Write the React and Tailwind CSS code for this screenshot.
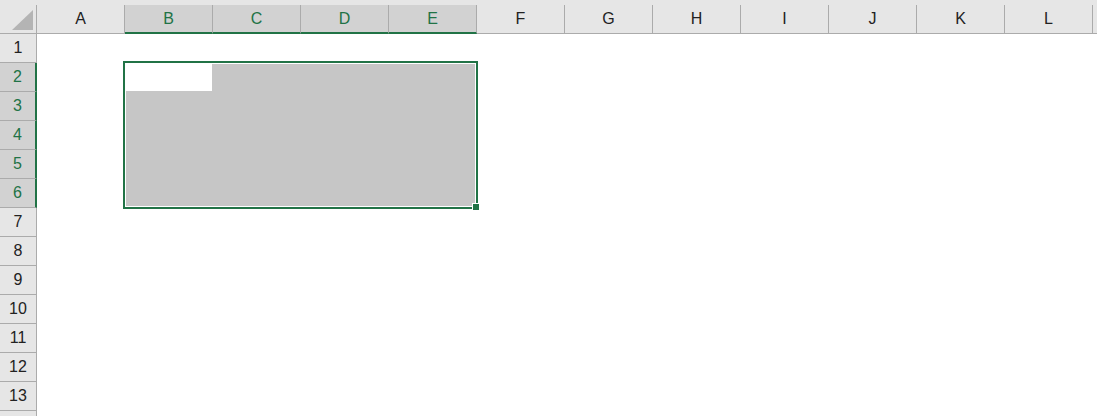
import React from 'react';

const columns = ['A', 'B', 'C', 'D', 'E', 'F', 'G', 'H', 'I', 'J', 'K', 'L', ''];
const rows = [1, 2, 3, 4, 5, 6, 7, 8, 9, 10, 11, 12, 13, ''];
const selectedCols = ['B', 'C', 'D', 'E'];
const selectedRows = [2, 3, 4, 5, 6];

function ColumnHeader({ label }) {
  const selected = selectedCols.includes(label);
  return (
    <div
      className={
        selected
          ? 'w-[88px] shrink-0 h-[29px] flex items-center justify-center border-r border-r-[#ababab] border-b-2 border-b-[#217346] bg-[#d2d2d2] text-[#217346]'
          : 'w-[88px] shrink-0 h-[29px] flex items-center justify-center border-r border-b border-[#ababab] text-[#222222]'
      }
    >
      {label}
    </div>
  );
}

function RowHeader({ n }) {
  const selected = selectedRows.includes(n);
  return (
    <div
      className={
        selected
          ? 'h-[29px] shrink-0 flex items-center justify-center border-b border-b-[#ababab] border-r-2 border-r-[#217346] bg-[#d2d2d2] text-[#217346]'
          : 'h-[29px] shrink-0 flex items-center justify-center border-b border-r border-[#ababab] text-[#222222]'
      }
    >
      {n}
    </div>
  );
}

export default function App() {
  return (
    <div
      className="relative w-[1097px] h-[416px] overflow-hidden bg-white text-[16px]"
      style={{ fontFamily: '"Liberation Sans", Arial, sans-serif' }}
    >
      <div className="flex h-[34px] pt-[5px] bg-[#e6e6e6]">
        <div className="w-[37px] shrink-0 h-[29px] border-r border-b border-[#ababab]">
          <svg width="36" height="28" viewBox="0 0 36 28">
            <polygon points="33,5 33,25 12,25" fill="#b4b4b4" />
          </svg>
        </div>
        {columns.map((c, i) => (
          <ColumnHeader key={i} label={c} />
        ))}
      </div>

      <div className="flex">
        <div className="w-[37px] shrink-0 flex flex-col bg-[#e6e6e6]">
          {rows.map((n, i) => (
            <RowHeader key={i} n={n} />
          ))}
        </div>
        <div className="flex-1 bg-white" />
      </div>

      {/* selection B2:E6 */}
      <div className="absolute left-[123px] top-[61px] w-[355px] h-[148px] border-2 border-[#217346] p-[1px] bg-white flex">
        <div className="relative flex-1 bg-[#c6c6c6]">
          <div className="absolute left-0 top-0 w-[86px] h-[27px] bg-white" />
        </div>
      </div>
      <div className="absolute left-[472px] top-[203px] w-[8px] h-[8px] border border-white bg-[#217346]" />
    </div>
  );
}
